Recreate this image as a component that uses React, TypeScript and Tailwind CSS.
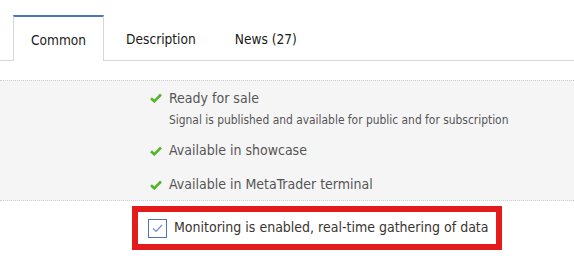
import React from "react";

const FONT = { fontFamily: '"DejaVu Sans Condensed", "DejaVu Sans", Tahoma, sans-serif' };

const tabs = ["Common", "Description", "News (27)"];

const items = [
  {
    title: "Ready for sale",
    note: "Signal is published and available for public and for subscription",
  },
  { title: "Available in showcase" },
  { title: "Available in MetaTrader terminal" },
];

const Check = () => (
  <svg width="12" height="10" viewBox="0 0 12 10" className="shrink-0">
    <path d="M1 5.2 L4.3 8.3 L11 1.5" fill="none" stroke="#52b52a" strokeWidth="2.6" />
  </svg>
);

export default function App() {
  return (
    <div className="w-[574px] h-[256px] bg-white overflow-hidden" style={FONT}>
      <div className="pt-[15px] pl-[13px] flex gap-[5px] border-b border-[#d8d8d8] h-[61px]">
        {tabs.map((t, i) => (
          <div
            key={t}
            className={
              i === 0
                ? "h-[46px] px-[17px] flex items-center text-[13.6px] text-[#1a1a1a] bg-white border-t-2 border-t-[#4a78c0] border-x border-x-[#d8d8d8] -mb-px"
                : "h-[46px] px-[17px] flex items-center text-[13.6px] text-[#1a1a1a]"
            }
          >
            <span className="pt-[2px]">{t}</span>
          </div>
        ))}
      </div>

      <div className="mt-[19px] bg-[#f5f5f5] border-y border-dotted border-[#cfcfcf] pl-[150px] pt-[8px] h-[121px]">
        {items.map((it, i) => (
          <div key={i} className={i === 0 ? "" : i === 1 ? "mt-[12px]" : "mt-[16px]"}>
            <div className="flex items-center gap-[7px] text-[14px] text-[#555] h-[18px]">
              <Check />
              <span>{it.title}</span>
            </div>
            {it.note && (
              <div className="pl-[19px] mt-[5px] text-[11.9px] text-[#555]">{it.note}</div>
            )}
          </div>
        ))}
      </div>

      <div className="ml-[132px] mt-[5px] w-[370px] h-[44px] border-[6px] border-[#e41b1b] flex items-center pl-[10px] gap-[7px]">
        <div className="w-[19px] h-[19px] border border-[#4f74b5] bg-white flex items-center justify-center">
          <svg width="11" height="9" viewBox="0 0 11 9">
            <path d="M1 4.5 L4 7.5 L10 1" fill="none" stroke="#6d8fc8" strokeWidth="1.2" />
          </svg>
        </div>
        <span className="text-[14px] text-[#3a3530] -mt-[1px]">Monitoring is enabled, real-time gathering of data</span>
      </div>
    </div>
  );
}
